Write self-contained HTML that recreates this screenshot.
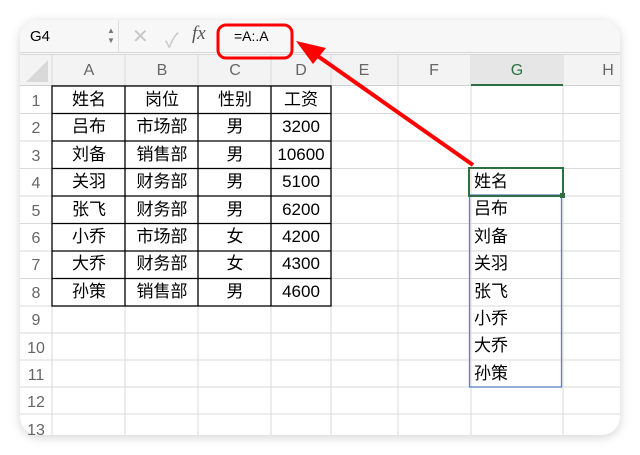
<!DOCTYPE html><html><head><meta charset="utf-8"><style>
body{margin:0;width:640px;height:455px;background:#fff;overflow:hidden;font-family:"Liberation Sans","Noto Sans CJK SC",sans-serif;position:relative}
.win{position:absolute;left:20px;top:20px;width:600px;height:415px;border-radius:18px;overflow:hidden;background:#fff;box-shadow:0 2px 10px rgba(0,0,0,.18)}
.fb{position:absolute;left:0;top:0;width:600px;height:32px;background:#f7f7f7;border-bottom:3px double #d8d8d8}
.hdr{position:absolute;top:35px;height:30px;background:#f3f3f3;border-bottom:1px solid #d0d0d0;left:0;width:600px}
.t{position:absolute;font-size:17px;color:#000;text-align:center;height:27px;line-height:27px}
.h{position:absolute;color:#666;font-size:16px;text-align:center;height:27px;line-height:27px}
</style></head><body>
<div class="win">
<div class="fb">
 <div style="position:absolute;left:10px;top:8px;font-size:15px">G4</div>
 <div style="position:absolute;left:87px;top:6px;font-size:8px;color:#777;line-height:10px">▲<br>▼</div>
 <div style="position:absolute;left:98px;top:0;width:1px;height:32px;background:#ddd"></div>
 <div style="position:absolute;left:112px;top:4px;font-size:20px;color:#c8c8c8">✕</div>
 <div style="position:absolute;left:145px;top:4px;font-size:20px;color:#c8c8c8">✓</div>
 <div style="position:absolute;left:172px;top:3px;font-size:19px;font-style:italic;font-family:'Liberation Serif',serif;color:#555">fx</div>
 <div style="position:absolute;left:214px;top:8px;font-size:14px">=A:.A</div>
</div>
<div class="hdr"></div>
<svg width="600" height="415" style="position:absolute;left:0;top:0">
<polygon points="28,40 28,62 6,62" fill="#d9d9d9"/>
<g stroke="#dadada" stroke-width="1">
<line x1="32" y1="35" x2="32" y2="415"/><line x1="105" y1="35" x2="105" y2="415"/><line x1="178" y1="35" x2="178" y2="415"/><line x1="251" y1="35" x2="251" y2="415"/><line x1="311" y1="35" x2="311" y2="415"/><line x1="378" y1="35" x2="378" y2="415"/><line x1="451" y1="35" x2="451" y2="415"/><line x1="543" y1="35" x2="543" y2="415"/>
<line x1="0" y1="93.5" x2="600" y2="93.5"/><line x1="0" y1="121" x2="600" y2="121"/><line x1="0" y1="148.5" x2="600" y2="148.5"/><line x1="0" y1="176" x2="600" y2="176"/><line x1="0" y1="203.5" x2="600" y2="203.5"/><line x1="0" y1="231" x2="600" y2="231"/><line x1="0" y1="258.5" x2="600" y2="258.5"/><line x1="0" y1="286" x2="600" y2="286"/><line x1="0" y1="313" x2="600" y2="313"/><line x1="0" y1="340" x2="600" y2="340"/><line x1="0" y1="367" x2="600" y2="367"/><line x1="0" y1="394" x2="600" y2="394"/>
</g>
<rect x="451" y="35" width="92" height="30" fill="#e6e6e6"/>
<line x1="451" y1="65" x2="543" y2="65" stroke="#2f7043" stroke-width="2"/>
<g stroke="#000" stroke-width="1.3" fill="none">
<rect x="32" y="66" width="279" height="220"/>
<line x1="105" y1="66" x2="105" y2="286"/><line x1="178" y1="66" x2="178" y2="286"/><line x1="251" y1="66" x2="251" y2="286"/>
<line x1="32" y1="93.5" x2="311" y2="93.5"/><line x1="32" y1="121" x2="311" y2="121"/><line x1="32" y1="148.5" x2="311" y2="148.5"/><line x1="32" y1="176" x2="311" y2="176"/><line x1="32" y1="203.5" x2="311" y2="203.5"/><line x1="32" y1="231" x2="311" y2="231"/><line x1="32" y1="258.5" x2="311" y2="258.5"/>
</g>
<rect x="449.5" y="175" width="92" height="192" fill="none" stroke="#5b7fc7" stroke-width="1.3"/>
<rect x="449" y="148" width="94" height="28" fill="none" stroke="#2f7043" stroke-width="2"/>
<rect x="540" y="173" width="5" height="5" fill="#2f7043"/>
</svg>
</div>
<div id="c"></div>
<script>
let s='';const cols=['A','B','C','D','E','F','G','H'],cx=[89,162,235,301,364,434,517,608];
cols.forEach((c,i)=>s+=`<div class="h" style="left:${cx[i]-20}px;width:40px;top:57px;${c=='G'?'color:#2f7043':''}">${c}</div>`);
for(let r=1;r<=13;r++)s+=`<div class="h" style="left:20px;width:32px;top:${88+(r-1)*27.4}px">${r}</div>`;
const d=[['姓名','岗位','性别','工资'],['吕布','市场部','男','3200'],['刘备','销售部','男','10600'],['关羽','财务部','男','5100'],['张飞','财务部','男','6200'],['小乔','市场部','女','4200'],['大乔','财务部','女','4300'],['孙策','销售部','男','4600']];
d.forEach((row,r)=>row.forEach((v,i)=>s+=`<div class="t" style="left:${cx[i]-36}px;width:72px;top:${86+r*27.4}px">${v}</div>`));
['姓名','吕布','刘备','关羽','张飞','小乔','大乔','孙策'].forEach((v,k)=>s+=`<div class="t" style="left:474px;top:${168+k*27.4}px">${v}</div>`);
document.getElementById('c').innerHTML=s;
</script>
<svg width="640" height="455" style="position:absolute;left:0;top:0">
<rect x="218" y="25" width="74" height="33" rx="8" fill="none" stroke="#f00" stroke-width="3"/>
<line x1="473" y1="165" x2="312" y2="52" stroke="#f00" stroke-width="4"/>
<polygon points="296,41 326,48 313,64" fill="#f00"/>
</svg>
</body></html>
